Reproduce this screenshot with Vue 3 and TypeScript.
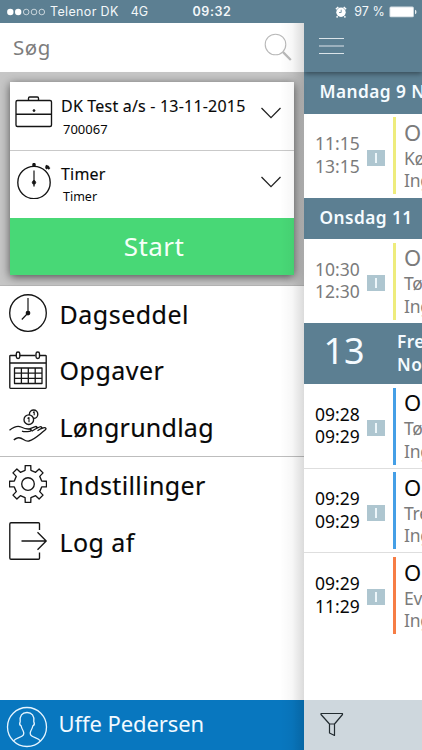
<script setup lang="ts">
interface MenuItem {
  id: string
  label: string
  icon: 'clock' | 'calendar' | 'wage' | 'gear' | 'exit'
}
interface Entry {
  from: string
  to: string
  tone: 'yellow' | 'blue' | 'orange'
  past?: boolean
  lines: [string, string, string]
}
interface Day {
  title: string[]
  number?: string
  entries: Entry[]
}

const primary: MenuItem[] = [
  { id: 'dagseddel', label: 'Dagseddel', icon: 'clock' },
  { id: 'opgaver', label: 'Opgaver', icon: 'calendar' },
  { id: 'loen', label: 'Løngrundlag', icon: 'wage' },
]
const secondary: MenuItem[] = [
  { id: 'indstillinger', label: 'Indstillinger', icon: 'gear' },
  { id: 'logaf', label: 'Log af', icon: 'exit' },
]
const groups: MenuItem[][] = [primary, secondary]

const days: Day[] = [
  { title: ['Mandag 9 N'], entries: [{ from: '11:15', to: '13:15', tone: 'yellow', past: true, lines: ['O', 'Kø', 'Ing'] }] },
  { title: ['Onsdag 11'], entries: [{ from: '10:30', to: '12:30', tone: 'yellow', past: true, lines: ['O', 'Tø', 'Ing'] }] },
  {
    title: ['Fre', 'No'],
    number: '13',
    entries: [
      { from: '09:28', to: '09:29', tone: 'blue', lines: ['O', 'Tø', 'Ing'] },
      { from: '09:29', to: '09:29', tone: 'blue', lines: ['O', 'Tre', 'Ing'] },
      { from: '09:29', to: '11:29', tone: 'orange', lines: ['O', 'Ev', 'Ing'] },
    ],
  },
]

// Outline of an eight-toothed cog centred in a 38 x 38 box.
const gearPath = (() => {
  const pts: string[] = []
  const shape: [number, number][] = [[-12, 14], [-8.5, 18.7], [8.5, 18.7], [12, 14]]
  for (let i = 0; i < 8; i++) {
    for (const [a, r] of shape) {
      const t = ((i * 45 + a - 90) * Math.PI) / 180
      pts.push(`${(19 + r * Math.cos(t)).toFixed(2)} ${(19 + r * Math.sin(t)).toFixed(2)}`)
    }
  }
  return `M${pts.join('L')}Z`
})()
</script>

<template>
  <div class="screen">
    <header class="status">
      <div class="carrier">
        <svg width="38" height="8" viewBox="0 0 38 8">
          <circle cx="3.3" cy="4" r="3.2" fill="#fff" />
          <circle cx="11.2" cy="4" r="3.2" fill="#fff" />
          <g fill="none" stroke="#e3eaee" stroke-width=".8">
            <circle cx="19.2" cy="4" r="2.8" /><circle cx="27" cy="4" r="2.8" /><circle cx="34.8" cy="4" r="2.8" />
          </g>
        </svg>
        <span class="operator">Telenor DK</span>
        <span class="network">4G</span>
      </div>
      <strong class="clock">09:32</strong>
      <div class="power">
        <svg width="12" height="12" viewBox="0 0 12 12">
          <circle cx="6" cy="6.3" r="4.7" fill="#fff" />
          <path d="M.9 3.2 3.3 1M11.1 3.2 8.7 1M2.6 10.2l-1 1.2M9.4 10.2l1 1.2" stroke="#fff" stroke-width="1.5" />
          <path d="M6.2 3.7v2.800H4" fill="none" stroke="#5c7f92" stroke-width=".8" />
        </svg>
        <span class="percent">97 %</span>
        <svg width="28" height="12" viewBox="0 0 28 12">
          <rect x=".5" y=".6" width="24.4" height="10.6" rx="1.5" fill="#d5dfe4" />
          <rect x="1.4" y="1.5" width="22.6" height="8.8" rx=".8" fill="#fff" />
          <path d="M26 3.8q1.5.5 1.5 2.2T26 8.2Z" fill="#e8eef1" />
        </svg>
      </div>
    </header>

    <div class="body">
      <aside class="drawer">
        <div class="search">
          <span>Søg</span>
          <svg width="28" height="29" viewBox="0 0 28 29" fill="none" stroke="#b9b9b9">
            <circle cx="11.5" cy="11.5" r="10.3" stroke-width="1.1" />
            <path d="m18.8 18.9 8 8.1" stroke-width="2.3" />
          </svg>
        </div>

        <section class="tracker">
          <div class="card">
            <div class="pick">
              <svg class="pick-icon" width="38" height="34" viewBox="0 0 38 34" fill="none" stroke="#151515" stroke-width="1.35">
                <rect x="1" y="5.500" width="35.500" height="26" rx="1.5" />
                <path d="M13.500 5.500V3.200Q13.500 2 14.700 2h7.600Q23.500 2 23.500 3.200V5.500M1 19.200h35.500" />
                <circle cx="19" cy="15.600" r="1" fill="#151515" stroke-width=".8" />
              </svg>
              <div class="pick-text"><b>DK Test a/s - 13-11-2015</b><small>700067</small></div>
              <svg class="chevron" width="20" height="12" viewBox="0 0 20 12" fill="none" stroke="#222" stroke-width="1.3"><path d="m.5 1 9.5 9.6L19.500 1" /></svg>
            </div>
            <div class="pick">
              <svg class="pick-icon stop" width="38" height="38" viewBox="0 0 38 38" fill="none" stroke="#151515" stroke-width="1.35">
                <circle cx="19" cy="21.500" r="16.200" />
                <path d="M19 9.500v12" stroke-width="1.2" />
                <path d="M19 19v6.500" />
                <circle cx="19" cy="21.500" r="1.800" fill="#151515" stroke-width=".6" />
                <path d="M17.300 4h3.400M19 2v3.600" stroke-width="2.500" />
                <path d="m30.800 4.500 3.800 3.400M33.700 5l-3 2.700" stroke-width="2.300" />
              </svg>
              <div class="pick-text second"><b>Timer</b><small>Timer</small></div>
              <svg class="chevron" width="20" height="12" viewBox="0 0 20 12" fill="none" stroke="#222" stroke-width="1.3"><path d="m.5 1 9.500 9.600L19.500 1" /></svg>
            </div>
            <button class="start">Start</button>
          </div>
        </section>

        <nav class="menu">
          <ul v-for="(group, g) in groups" :key="g" class="group">
            <li v-for="item in group" :key="item.id" class="item">
              <svg class="glyph" width="38" height="38" viewBox="0 0 38 38" fill="none" stroke="#161616" stroke-width="1.35" stroke-linejoin="round">
                <template v-if="item.icon === 'clock'">
                  <circle cx="19" cy="19" r="18.300" />
                  <path d="M19 4v15l-6.200 6.500" stroke-width="1.200" />
                  <circle cx="19" cy="19" r="1.700" fill="#161616" />
                </template>
                <template v-else-if="item.icon === 'calendar'">
                  <path d="M7 4.500H1.500Q.8 4.500.8 5.300V36.600q0 .7.700.7h35q.7 0 .7-.7V5.300q0-.8-.7-.8H31M11 4.500h15.500M.8 12h36.400" />
                  <rect x="7.300" y="1" width="3.500" height="6.500" rx="1.700" />
                  <rect x="27" y="1" width="3.500" height="6.500" rx="1.700" />
                  <path d="M5.500 17h27.500v15.500H5.500ZM5.500 22.200H33M5.500 27.300H33M12.400 17v15.500M19.300 17v15.500M26.200 17v15.500" stroke-width="1.300" />
                </template>
                <template v-else-if="item.icon === 'wage'">
                  <circle cx="24.600" cy="7.200" r="4.200" />
                  <circle cx="19.800" cy="12.700" r="4.800" fill="#fff" />
                  <path d="M18.500 11.500l1.500-1v4.800M24 5.500l1.200-.7v3.500" stroke-width="1.100" />
                  <path d="M.5 23.200C4 20.500 8 18.200 12 20c3 1.500 4.800 2.300 8 2 2.500-.2 3.200 2 .5 2.300-2.500.4-5 .8-7.500-.2M20.500 21.800l5.200-2c2-.8 3.200.4 1.500 1.700l-4.500 2.800M26.500 22l4-2c1.800-.8 3 .3 1.500 1.500l-3.500 2.300M31 22.200l3.300-1.400c2.800-.8 3.500 1 1.500 2.500-5.500 4-9.300 8.700-16 10.700-5 1-6-4.500-11.500-3-1.300.3-2.400 1-3.500 2" />
                </template>
                <template v-else-if="item.icon === 'gear'">
                  <path :d="gearPath" />
                  <circle cx="19" cy="19" r="6.300" />
                </template>
                <template v-else>
                  <path d="M30.500 8V1.700q0-1-1-1H2q-1.200 0-1.200 1.200V36q0 1.200 1.200 1.200h27.500q1 0 1-1V30.500M12.500 19H37M28.500 10.300l8.700 8.700-8.700 8.700" />
                </template>
              </svg>
              <span :class="['label', item.id]">{{ item.label }}</span>
            </li>
          </ul>
        </nav>

        <footer class="user">
          <svg width="42" height="42" viewBox="0 0 42 42" fill="none" stroke="#e6f5ff" stroke-width="1.300">
            <circle cx="21" cy="21" r="19.500" />
            <path d="M7.500 35c2-3 6-3.200 8.700-5 2.200-1.500 1.800-3.300 1-5-1-1.700-1.700-3-2-5-1.600-1-1.700-3-1-4.300-.8-6 2-9.200 6.800-9.200s7.600 3.200 6.800 9.200c.7 1.300.6 3.300-1 4.300-.3 2-1 3.300-2 5-.8 1.700-1.200 3.500 1 5 2.700 1.800 6.700 2 8.700 5" />
          </svg>
          <span>Uffe Pedersen</span>
        </footer>
      </aside>

      <main class="agenda">
        <div class="bar">
          <svg width="26" height="18" viewBox="0 0 26 18" stroke="#dbe4e9" stroke-width="1.200"><path d="M0 1.500h25M0 9h25M0 16.500h25" /></svg>
        </div>
        <section v-for="(day, d) in days" :key="d">
          <div :class="['day', { today: day.number }]">
            <span v-if="day.number" class="number">{{ day.number }}</span>
            <div class="names"><div v-for="t in day.title" :key="t">{{ t }}</div></div>
          </div>
          <article v-for="(e, i) in day.entries" :key="i" :class="['entry', { past: e.past }]">
            <div class="times"><div>{{ e.from }}</div><div>{{ e.to }}</div></div>
            <span class="badge"><i></i></span>
            <span :class="['stripe', e.tone]"></span>
            <div class="detail">
              <div class="head">{{ e.lines[0] }}</div>
              <div>{{ e.lines[1] }}</div>
              <div>{{ e.lines[2] }}</div>
            </div>
          </article>
        </section>
        <footer class="tools">
          <svg width="24" height="25" viewBox="0 0 24 25" fill="none" stroke="#222b30" stroke-width="1.200" stroke-linejoin="round">
            <path d="M1 1.500h21.500v1L14.500 12v11.500L9.500 21v-9L1 2.500ZM9.500 12h5" />
          </svg>
        </footer>
      </main>
    </div>
  </div>
</template>

<style>
body { background: #fff; }
</style>

<style scoped>
.screen { width: 422px; height: 750px; overflow: hidden; background: #fff; font-family: "Noto Sans", "Open Sans", sans-serif; color: #080808; display: flex; flex-direction: column; white-space: nowrap; }
.status { height: 23px; flex: none; background: #5c7f92; color: #f3f7f9; font-family: Inter, Roboto, sans-serif; font-size: 12.500px; line-height: 23px; display: grid; grid-template-columns: 1fr auto 1fr; align-items: center; padding: 0 5px 0 7px; }
.carrier, .power { display: flex; align-items: center; }
.operator { margin-left: 5px; letter-spacing: .35px; }
.network { margin-left: 12px; }
.clock { font-weight: 600; font-size: 12.500px; letter-spacing: .6px; }
.power { justify-content: flex-end; }
.percent { margin: 0 4px 0 7px; font-size: 12.500px; letter-spacing: .1px; }
.body { flex: 1; display: flex; min-height: 0; }
.drawer { width: 304px; flex: none; display: flex; flex-direction: column; position: relative; }
.drawer::after { content: ""; position: absolute; top: 0; right: 0; bottom: 0; width: 24px; pointer-events: none; background: linear-gradient(to right, rgba(0,0,0,0), rgba(0,0,0,.03) 50%, rgba(0,0,0,.14)); }
.search { height: 49px; flex: none; display: flex; align-items: center; justify-content: space-between; padding: 0 12px 0 13px; color: #7d7d7d; font-size: 20.500px; letter-spacing: .6px; line-height: 46px; box-sizing: border-box; }
.search span { padding-bottom: 2px; }
.search svg { margin-top: -1px; }
.tracker { height: 214px; flex: none; box-sizing: border-box; padding: 10px 10px 0; background: #c6c6c6; border-bottom: 1px solid #b5b5b5; }
.card { height: 192.500px; background: #fff; box-shadow: 0 2px 9px rgba(0,0,0,.6); display: flex; flex-direction: column; }
.pick { height: 68px; flex: none; box-sizing: border-box; display: flex; align-items: flex-start; padding: 0 13px 0 5px; }
.pick + .pick { border-top: 1px solid #c9c9c9; }
.pick-icon { margin-top: 13px; flex: none; }
.pick-icon.stop { margin-top: 9.500px; }
.pick-text { flex: 1; margin: 12.500px 0 0 8px; display: flex; flex-direction: column; }
.pick-text b { font-weight: 400; font-size: 16px; line-height: 22px; letter-spacing: .2px; -webkit-text-stroke: .12px; }
.pick-text small { font-size: 13px; line-height: 20px; margin: 2px 0 0 2px; }
.second { margin-top: 12px; }
.second small { font-size: 12.500px; }
.chevron { margin-top: 25px; flex: none; }
.start { flex: 1; border: 0; background: #48d876; color: #f6fff8; font: inherit; font-size: 26px; line-height: 56px; padding: 0 0 0 4px; letter-spacing: .4px; }
.menu { flex: 1; }
.group { margin: 0; padding: 0; list-style: none; }
.group + .group { border-top: 1px solid #bdbdbd; }
.item { height: 56.800px; display: flex; align-items: center; padding-left: 8.500px; }
.glyph { flex: none; margin-top: -3px; }
.label { margin: -1.500px 0 0 13px; font-size: 25px; line-height: 56px; letter-spacing: .5px; -webkit-text-stroke: .15px; }
.loen { letter-spacing: .25px; }
.indstillinger { letter-spacing: .38px; }
.logaf { letter-spacing: .4px; }
.user { height: 50px; flex: none; background: #0877bf; color: #f2faff; display: flex; align-items: center; padding-left: 6px; font-size: 22px; }
.user svg { margin-top: 3px; }
.user span { margin-left: 10.500px; line-height: 46px; padding-bottom: 4px; letter-spacing: -.08px; }
.agenda { flex: 1; min-width: 0; overflow: hidden; display: flex; flex-direction: column; }
.bar { height: 49px; flex: none; background: #5c7f92; box-shadow: 0 2px 5px rgba(0,0,0,.4); position: relative; display: flex; align-items: center; padding-left: 15px; box-sizing: border-box; }
.bar svg { margin-top: -3px; }
.day { height: 41.500px; box-sizing: border-box; padding-bottom: 1px; background: #5c7f92; color: #f5fbff; display: flex; align-items: center; padding-left: 15.500px; font-size: 17.300px; font-weight: 600; letter-spacing: .45px; line-height: 22.500px; }
.today { height: 61px; padding: 0; }
.number { width: 80px; flex: none; text-align: center; font-size: 36px; font-weight: 400; letter-spacing: 0; padding-bottom: 5px; }
.today .names { margin-left: 13px; }
.entry { height: 84.700px; box-sizing: border-box; border-bottom: 1px solid #dedede; display: flex; align-items: flex-start; }
.entry.past { height: 84px; border-bottom: 0; }
.entry:last-child { border-bottom: 0; }
.times { width: 63px; flex: none; padding: 18.700px 0 0 11px; box-sizing: border-box; font-size: 17.500px; line-height: 22.500px; }
.past .times, .past .head { color: #7b7b7b; }
.badge { width: 18px; height: 16px; flex: none; margin-top: 36px; background: #aec6d0; display: flex; align-items: center; justify-content: center; }
.badge i { width: 2px; height: 10px; background: #edf6fa; }
.stripe { width: 3.500px; flex: none; height: 77px; margin: 3.500px 0 0 7.500px; }
.yellow { background: #eeec7c; }
.blue { background: #459fe6; }
.orange { background: #f67d45; }
.detail { flex: none; margin: 4.300px 0 0 8px; font-size: 17.500px; letter-spacing: -.3px; line-height: 22.500px; color: #7b7b7b; }
.head { font-size: 22px; line-height: 29px; color: #080808; }
.tools { height: 50px; flex: none; margin-top: auto; background: #ced7dd; display: flex; align-items: center; padding-left: 16px; }
.tools svg { margin-top: -2px; }
</style>
